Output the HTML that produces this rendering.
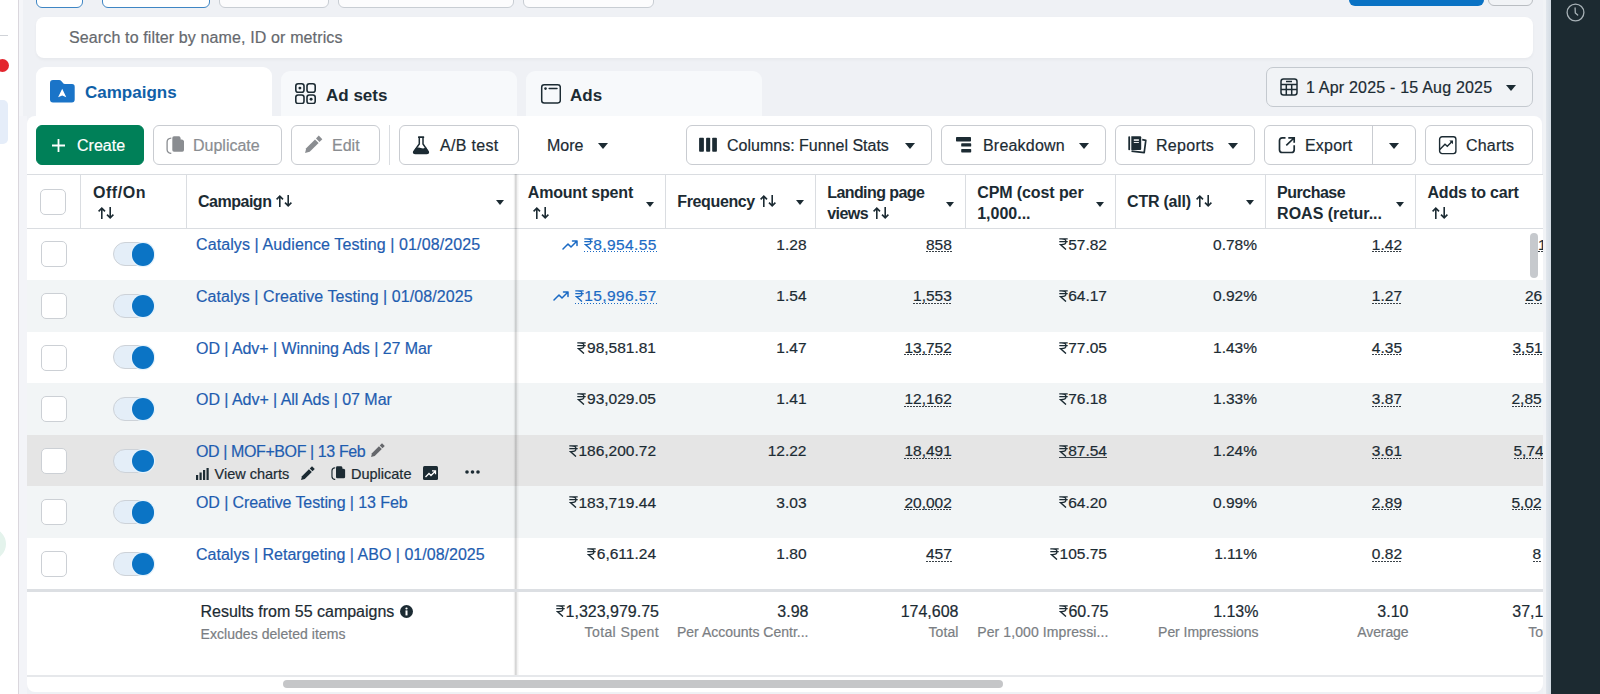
<!DOCTYPE html>
<html><head><meta charset="utf-8">
<style>
*{box-sizing:border-box;margin:0;padding:0}
html,body{width:1600px;height:694px;overflow:hidden}
body{position:relative;background:#eff1f5;font-family:"Liberation Sans",sans-serif;color:#1c2b33;font-size:16px}
.abs{position:absolute}
#sidebar{left:0;top:0;width:19px;height:694px;background:#fff;border-right:1px solid #dad7dd}
#rightstrip{left:1543px;top:0;width:8px;height:694px;background:linear-gradient(to right,#f1f3f6 0,#f1f3f6 3px,#e2e7ed 3px,#d3dbe3 8px)}
#dark{left:1551px;top:0;width:49px;height:694px;background:#1c2a31}
.topbtn{position:absolute;top:-20px;height:28px;border:1px solid #c8cdd3;border-radius:6px;background:#fcfcfd}
.topbtn.blue{border:1.5px solid #3f86c4;background:#fff}
#search{left:36px;top:17px;width:1497px;height:41px;background:#fff;border-radius:8px;box-shadow:0 1.5px 3px rgba(0,0,0,0.035)}
#search span{position:absolute;left:33px;top:11px;font-size:16px;color:#66696e;line-height:20px;letter-spacing:0.13px}
.tab{position:absolute;top:71px;height:46px;width:236px;background:#f7f9fb;border-radius:9px 9px 0 0}
.tab.active{top:67px;height:50px;background:#fff}
.tab .lbl{position:absolute;font-weight:bold;font-size:17px;line-height:20px}
#date{left:1266px;top:67px;width:267px;height:40px;border:1px solid #c4c9cf;border-radius:7px;background:#f1f3f6}
#panel{left:27px;top:116px;width:1515px;height:60px;background:#fff;border-radius:8px 8px 0 0}
.btn{position:absolute;top:125px;height:40px;border:1px solid #c9ccd1;border-radius:6px;background:#fff;font-size:16px;line-height:20px;color:#1c2b33}
.btn .t{position:absolute;top:10.3px;white-space:nowrap}
.tri{position:absolute;width:0;height:0;border-left:5px solid transparent;border-right:5px solid transparent;border-top:6px solid #1c2b33}
#card{left:27px;top:174px;width:1516px;height:518px;background:#fff;border-radius:0 0 8px 8px;overflow:hidden}
#card .hline{position:absolute;left:0;width:1516px;height:1px;background:#dadde1}
.vl{position:absolute;width:1px;background:#dadde1}
.row{position:absolute;left:0;width:1516px;height:51.5px}
.row.g{background:#f2f5f6}
.row.h{background:#e5e5e5}
.cb{position:absolute;left:13.5px;width:26px;height:26px;border:1px solid #ccd0d5;border-radius:5px;background:#fff}
.tg{position:absolute;left:85.5px;width:42px;height:24px;border-radius:12px;background:#e4eef8;border:1px solid #cdd2d8}
.tg::after{content:"";position:absolute;right:-0.5px;top:0px;width:22.5px;height:22.5px;border-radius:50%;background:#0b74c5;box-shadow:0 0 0 1.2px #e6f3fc}
.hd{position:absolute;top:0;height:54px;font-weight:bold;font-size:16px;line-height:21px;color:#1c2b33}
.hd .t{position:absolute;left:11px;top:8px;white-space:nowrap}
.hd .one{top:18.5px}
.hd .tri{top:26px}
.name{position:absolute;left:169px;font-size:16px;color:#1f5db0;white-space:nowrap;line-height:20px}
.num{position:absolute;font-size:15.5px;line-height:20px;white-space:nowrap;text-align:right}
.dot{background-image:linear-gradient(to right,#3a4248 55%,transparent 55%);background-size:3px 1.4px;background-repeat:repeat-x;background-position:0 calc(100% - 0.2px)}
.acts{position:absolute;left:169px;width:300px;height:20px;font-size:14.5px;line-height:20px;color:#1c2b33;white-space:nowrap}
.dot.blue{background-image:linear-gradient(to right,#1b6ac4 50%,transparent 50%)}
.foot{position:absolute;text-align:right;white-space:nowrap}
.foot .v{font-size:16px;line-height:20px;color:#1c2b33}
.foot .s{font-size:14px;line-height:20px;color:#7a7e83;margin-top:0.5px}
body{-webkit-text-stroke:0.2px currentColor}
.hd,.tab .lbl{-webkit-text-stroke:0}
</style></head><body>
<div id="sidebar" class="abs">
  <div class="abs" style="left:0;top:35px;width:8px;height:1px;background:#d0d3d8"></div>
  <div class="abs" style="left:-4px;top:59px;width:13px;height:13px;border-radius:50%;background:#e3262e"></div>
  <div class="abs" style="left:-6px;top:100px;width:14px;height:44px;border-radius:5px;background:#e5edf9"></div>
  <div class="abs" style="left:-26px;top:528px;width:32px;height:32px;border-radius:50%;background:#e4f3ec"></div>
</div>
<div id="rightstrip" class="abs"></div>
<div class="abs" style="left:19px;top:0;width:4px;height:116px;background:#f5f6f9"></div>
<div class="abs" style="left:19px;top:116px;width:8px;height:578px;background:#f3f4f8"></div>
<div id="dark" class="abs">
  <svg class="abs" style="left:14.4px;top:2px" width="21" height="21" viewBox="0 0 21 21"><circle cx="10.5" cy="10.5" r="8.4" fill="none" stroke="#a7b1b6" stroke-width="1.3"/><path d="M10.1 6 L10.3 10.9 L12.7 13.1" fill="none" stroke="#a7b1b6" stroke-width="1.3" stroke-linecap="round"/></svg>
</div>

<div class="topbtn blue" style="left:36px;width:47px"></div>
<div class="topbtn blue" style="left:102px;width:108px"></div>
<div class="topbtn" style="left:219px;width:110px"></div>
<div class="topbtn" style="left:338px;width:176px"></div>
<div class="topbtn" style="left:523px;width:131px"></div>
<div class="abs" style="left:1349px;top:-20px;width:135px;height:26px;border-radius:6px;background:#0a72c4"></div>
<div class="topbtn" style="left:1488px;width:45px;height:26px;background:#f1f3f6;border-color:#b9bdc2;border-width:1.3px"></div>

<div id="search" class="abs"><span>Search to filter by name, ID or metrics</span></div>

<div class="tab active" style="left:36px">
  <svg class="abs" style="left:14px;top:13px" width="25" height="23" viewBox="0 0 25 23"><path d="M0 3 Q0 0 3 0 H9 Q10.5 0 11.5 1.2 L12.8 2.8 Q13.5 4 15 4 H22 Q24.7 4 24.7 6.8 V19.5 Q24.7 22.4 21.8 22.4 H3 Q0 22.4 0 19.5 Z" fill="#1a74c8"/><path d="M12.2 8.7 L16.3 17.2 L12.2 15.4 L8.1 17.2 Z" fill="#fff"/></svg>
  <span class="lbl" style="left:49px;top:15.5px;color:#0f60a8">Campaigns</span>
</div>
<div class="tab" style="left:281px">
  <svg class="abs" style="left:14px;top:12px" width="21" height="21" viewBox="0 0 21 21" fill="none" stroke="#1c2b33" stroke-width="1.6"><rect x="0.8" y="0.8" width="8.2" height="8.5" rx="2.3"/><rect x="12" y="0.8" width="8.2" height="8.5" rx="2.3"/><rect x="0.8" y="12" width="8.2" height="8.5" rx="2.3"/><rect x="12" y="12" width="8.2" height="8.5" rx="2.3"/><circle cx="4.9" cy="5.1" r="1.45" fill="#1c2b33" stroke="none"/><circle cx="16.1" cy="16.3" r="1.45" fill="#1c2b33" stroke="none"/></svg>
  <span class="lbl" style="left:45px;top:14.5px">Ad sets</span>
</div>
<div class="tab" style="left:526px">
  <svg class="abs" style="left:14px;top:12px" width="21" height="21" viewBox="0 0 21 21" fill="none" stroke="#1c2b33" stroke-width="1.5"><rect x="1.7" y="1.7" width="18.6" height="18.2" rx="2.5"/><circle cx="5.5" cy="5.6" r="1.3" fill="#1c2b33" stroke="none"/><line x1="9.2" y1="5.6" x2="17" y2="5.6" stroke-linecap="round"/></svg>
  <span class="lbl" style="left:44px;top:14.5px">Ads</span>
</div>

<div id="date" class="abs">
  <svg class="abs" style="left:13px;top:10px" width="18" height="18" viewBox="0 0 18 18" fill="none" stroke="#1c2b33" stroke-width="1.5"><rect x="1" y="1" width="16" height="16" rx="2.5"/><line x1="1" y1="6.5" x2="17" y2="6.5"/><line x1="1" y1="11.5" x2="17" y2="11.5"/><line x1="6.3" y1="6.5" x2="6.3" y2="17"/><line x1="11.7" y1="6.5" x2="11.7" y2="17"/><line x1="6" y1="3.5" x2="12" y2="3.5"/></svg>
  <span class="abs" style="left:39px;top:10px;font-size:16px;line-height:20px;letter-spacing:0.2px">1 Apr 2025 - 15 Aug 2025</span>
  <div class="tri" style="left:239px;top:17px"></div>
</div>

<div id="panel" class="abs"></div>

<!-- toolbar -->
<div class="btn" style="left:36px;width:108px;background:#008058;border-color:#008058;color:#fff">
  <svg class="abs" style="left:14px;top:12px" width="15" height="15" viewBox="0 0 15 15"><path d="M7.5 1 V14 M1 7.5 H14" stroke="#fff" stroke-width="1.8"/></svg>
  <span class="t" style="left:40px;color:#fff">Create</span>
</div>
<div class="btn" style="left:153px;width:129px;color:#8a8d91">
  <svg class="abs" style="left:12px;top:10px" width="19" height="18" viewBox="0 0 19 18"><path d="M5.3 2.2 Q1.1 2.5 1.1 6 V13.5 Q1.1 17 5.3 17.4" fill="none" stroke="#8a8d91" stroke-width="1.3"/><path d="M8 0.2 H13.3 L18 4.9 V14 Q18 15.7 16.3 15.7 H8 Q6.3 15.7 6.3 14 V1.9 Q6.3 0.2 8 0.2 Z" fill="#8a8d91"/><path d="M14.6 0.6 L17.6 3.6 H14.6 Z" fill="#fff"/></svg>
  <span class="t" style="left:39px">Duplicate</span>
</div>
<div class="btn" style="left:291px;width:89px;color:#8a8d91">
  <svg class="abs" style="left:0;top:0" width="40" height="38" viewBox="0 0 40 38" fill="#8a8d91"><path d="M13.1 26.9 L14.2 22.3 L23 13.4 L26.6 17 L17.7 25.8 Z"/><path d="M24 12.5 L27.5 16 L30.3 13.2 L26.8 9.6 Z"/></svg>
  <span class="t" style="left:40px">Edit</span>
</div>
<div class="abs" style="left:389px;top:125px;width:1px;height:40px;background:#dadde1"></div>
<div class="btn" style="left:399px;width:120px">
  <svg class="abs" style="left:12px;top:9px" width="18" height="20" viewBox="0 0 18 20"><rect x="6" y="1.3" width="6.2" height="1.8" rx="0.6" fill="#1c2b33"/><path d="M7.3 2.5 V9 L1.8 16.5 Q1 18.6 3.4 18.6 H14.6 Q17 18.6 16.2 16.5 L11 9 V2.5" fill="none" stroke="#1c2b33" stroke-width="1.5"/><path d="M3.6 13.3 Q6.5 11.8 8.8 12.9 Q11.3 14 14.2 12.6 L16.2 16.5 Q17 18.6 14.6 18.6 H3.4 Q1 18.6 1.8 16.5 Z" fill="#1c2b33"/></svg>
  <span class="t" style="left:40px;letter-spacing:0.3px">A/B test</span>
</div>
<span class="abs" style="left:547px;top:135.5px;font-size:16px;line-height:20px">More</span>
<div class="tri" style="left:598px;top:143px"></div>

<div class="btn" style="left:686px;width:246px">
  <svg class="abs" style="left:12px;top:11px" width="19" height="16" viewBox="0 0 19 16" fill="#1c2b33"><rect x="0.1" y="0.8" width="4.8" height="14" rx="0.8"/><rect x="7.1" y="0.8" width="4.1" height="14" rx="0.8"/><rect x="13.2" y="0.8" width="4.7" height="14" rx="0.8"/></svg>
  <span class="t" style="left:40px">Columns: Funnel Stats</span>
  <div class="tri" style="left:218px;top:17px"></div>
</div>
<div class="btn" style="left:941px;width:165px">
  <svg class="abs" style="left:14px;top:10px" width="17" height="18" viewBox="0 0 17 18" fill="#1c2b33"><rect x="0" y="1.1" width="15" height="4.4" rx="0.7"/><rect x="5.2" y="7.2" width="10" height="3.4" rx="0.7"/><rect x="5.2" y="13" width="10" height="3.5" rx="0.7"/></svg>
  <span class="t" style="left:41px;letter-spacing:0.2px">Breakdown</span>
  <div class="tri" style="left:137px;top:17px"></div>
</div>
<div class="btn" style="left:1115px;width:140px">
  <svg class="abs" style="left:12px;top:10px" width="20" height="18" viewBox="0 0 20 18"><rect x="0.3" y="0.3" width="1.8" height="14" rx="0.8" fill="#1c2b33"/><path d="M3.3 0.3 H12.2 Q13.2 0.3 13.2 1.3 V13 Q13.2 14 12.2 14 H3.3 Z" fill="#1c2b33"/><rect x="5.8" y="3.3" width="5.1" height="1.5" fill="#fff"/><rect x="5.8" y="6.1" width="5.1" height="0.9" fill="#fff"/><path d="M14.2 3.7 L17.8 4.4 L16.2 16.6 L3.5 15.1" fill="none" stroke="#1c2b33" stroke-width="1.7" stroke-linejoin="round"/></svg>
  <span class="t" style="left:40px;letter-spacing:0.3px">Reports</span>
  <div class="tri" style="left:112px;top:17px"></div>
</div>
<div class="btn" style="left:1264px;width:152px">
  <svg class="abs" style="left:13px;top:10px" width="18" height="18" viewBox="0 0 18 18" fill="none" stroke="#1c2b33" stroke-width="1.7"><path d="M7.5 1.8 H4.3 Q1.5 1.8 1.5 4.6 V13.7 Q1.5 16.5 4.3 16.5 H13.4 Q16.2 16.5 16.2 13.7 V9.2"/><path d="M10.3 1.8 H16.2 V6.8 M16 2 L8.3 9.3"/></svg>
  <span class="t" style="left:40px;letter-spacing:0.2px">Export</span>
  <div class="abs" style="left:107px;top:0;width:1px;height:38px;background:#c9ccd1"></div>
  <div class="tri" style="left:124px;top:17px"></div>
</div>
<div class="btn" style="left:1425px;width:108px">
  <svg class="abs" style="left:12px;top:9px" width="20" height="20" viewBox="0 0 20 20" fill="none" stroke="#1c2b33" stroke-width="1.4"><rect x="1.6" y="1.7" width="16.3" height="16.9" rx="2.5"/><path d="M1.8 14.6 L7 9.3 L9.3 11.3 L14.3 6.3"/><path d="M11.3 5.6 H15 V9.3 Z" fill="#1c2b33" stroke="none"/></svg>
  <span class="t" style="left:40px;letter-spacing:0.2px">Charts</span>
</div>

<div id="card" class="abs">
<div class="hline" style="top:0"></div>
<div class="hline" style="top:53.9px"></div>
<div class="vl" style="left:52.8px;top:0.5px;height:54.4px"></div>
<div class="vl" style="left:158.7px;top:0.5px;height:54.4px"></div>
<div class="vl" style="left:638.0px;top:0.5px;height:54.4px"></div>
<div class="vl" style="left:787.9px;top:0.5px;height:54.4px"></div>
<div class="vl" style="left:937.9px;top:0.5px;height:54.4px"></div>
<div class="vl" style="left:1087.8px;top:0.5px;height:54.4px"></div>
<div class="vl" style="left:1237.8px;top:0.5px;height:54.4px"></div>
<div class="vl" style="left:1388.2px;top:0.5px;height:54.4px"></div>
<div class="cb" style="top:15px;left:13.2px"></div>
<div class="hd" style="left:53.3px;width:105.89999999999999px"><div class="t" style="top:8.4px;left:12.7px"><span style="letter-spacing:0.541px">Off/On</span><br><svg width="17" height="12" viewBox="0 0 17 12" style="display:inline-block;vertical-align:baseline;margin-left:5px" fill="none" stroke="#1c2b33" stroke-width="1.6" stroke-linejoin="miter"><path d="M3.8 12 V1.2 M0.6 4.4 L3.8 1.2 L7 4.4"/><path d="M12.2 0 V10.8 M9 7.6 L12.2 10.8 L15.4 7.6"/></svg></div></div>
<div class="hd" style="left:159.2px;width:329.8px"><div class="t" style="top:17.2px;left:11.8px"><span style="letter-spacing:-0.487px">Campaign</span><svg width="17" height="12" viewBox="0 0 17 12" style="display:inline-block;vertical-align:baseline;margin-left:5px" fill="none" stroke="#1c2b33" stroke-width="1.6" stroke-linejoin="miter"><path d="M3.8 12 V1.2 M0.6 4.4 L3.8 1.2 L7 4.4"/><path d="M12.2 0 V10.8 M9 7.6 L12.2 10.8 L15.4 7.6"/></svg></div><div class="tri" style="left:310.3px;top:25.6px;border-left-width:4.6px;border-right-width:4.6px;border-top-width:5.5px"></div></div>
<div class="hd" style="left:489px;width:149.5px"><div class="t" style="top:8.4px;left:11.8px"><span style="letter-spacing:-0.193px">Amount spent</span><br><svg width="17" height="12" viewBox="0 0 17 12" style="display:inline-block;vertical-align:baseline;margin-left:5px" fill="none" stroke="#1c2b33" stroke-width="1.6" stroke-linejoin="miter"><path d="M3.8 12 V1.2 M0.6 4.4 L3.8 1.2 L7 4.4"/><path d="M12.2 0 V10.8 M9 7.6 L12.2 10.8 L15.4 7.6"/></svg></div><div class="tri" style="left:130.0px;top:28px;border-left-width:4.6px;border-right-width:4.6px;border-top-width:5.5px"></div></div>
<div class="hd" style="left:638.5px;width:149.89999999999998px"><div class="t" style="top:17.2px;left:11.8px"><span style="letter-spacing:-0.373px">Frequency</span><svg width="17" height="12" viewBox="0 0 17 12" style="display:inline-block;vertical-align:baseline;margin-left:5px" fill="none" stroke="#1c2b33" stroke-width="1.6" stroke-linejoin="miter"><path d="M3.8 12 V1.2 M0.6 4.4 L3.8 1.2 L7 4.4"/><path d="M12.2 0 V10.8 M9 7.6 L12.2 10.8 L15.4 7.6"/></svg></div><div class="tri" style="left:130.39999999999998px;top:25.6px;border-left-width:4.6px;border-right-width:4.6px;border-top-width:5.5px"></div></div>
<div class="hd" style="left:788.4px;width:150.0px"><div class="t" style="top:8.4px;left:11.8px"><span style="letter-spacing:-0.572px">Landing page</span><br><span style="letter-spacing:-0.531px">views</span><svg width="17" height="12" viewBox="0 0 17 12" style="display:inline-block;vertical-align:baseline;margin-left:5px" fill="none" stroke="#1c2b33" stroke-width="1.6" stroke-linejoin="miter"><path d="M3.8 12 V1.2 M0.6 4.4 L3.8 1.2 L7 4.4"/><path d="M12.2 0 V10.8 M9 7.6 L12.2 10.8 L15.4 7.6"/></svg></div><div class="tri" style="left:130.5px;top:28px;border-left-width:4.6px;border-right-width:4.6px;border-top-width:5.5px"></div></div>
<div class="hd" style="left:938.4px;width:149.89999999999998px"><div class="t" style="top:8.4px;left:11.8px"><span style="letter-spacing:-0.095px">CPM (cost per</span><br>1,000...</div><div class="tri" style="left:130.39999999999998px;top:28px;border-left-width:4.6px;border-right-width:4.6px;border-top-width:5.5px"></div></div>
<div class="hd" style="left:1088.3px;width:150.0px"><div class="t" style="top:17.2px;left:11.8px"><span style="letter-spacing:-0.229px">CTR (all)</span><svg width="17" height="12" viewBox="0 0 17 12" style="display:inline-block;vertical-align:baseline;margin-left:5px" fill="none" stroke="#1c2b33" stroke-width="1.6" stroke-linejoin="miter"><path d="M3.8 12 V1.2 M0.6 4.4 L3.8 1.2 L7 4.4"/><path d="M12.2 0 V10.8 M9 7.6 L12.2 10.8 L15.4 7.6"/></svg></div><div class="tri" style="left:130.5px;top:25.6px;border-left-width:4.6px;border-right-width:4.6px;border-top-width:5.5px"></div></div>
<div class="hd" style="left:1238.3px;width:150.4000000000001px"><div class="t" style="top:8.4px;left:11.8px"><span style="letter-spacing:-0.499px">Purchase</span><br>ROAS (retur...</div><div class="tri" style="left:130.9000000000001px;top:28px;border-left-width:4.6px;border-right-width:4.6px;border-top-width:5.5px"></div></div>
<div class="hd" style="left:1388.7px;width:160.0px"><div class="t" style="top:8.4px;left:11.8px"><span style="letter-spacing:-0.175px">Adds to cart</span><br><svg width="17" height="12" viewBox="0 0 17 12" style="display:inline-block;vertical-align:baseline;margin-left:5px" fill="none" stroke="#1c2b33" stroke-width="1.6" stroke-linejoin="miter"><path d="M3.8 12 V1.2 M0.6 4.4 L3.8 1.2 L7 4.4"/><path d="M12.2 0 V10.8 M9 7.6 L12.2 10.8 L15.4 7.6"/></svg></div></div>
<div class="row" style="top:54.4px">
<div class="cb" style="top:13px"></div>
<div class="tg" style="top:13.8px"></div>
<div class="name" style="top:7px;letter-spacing:0.103px">Catalys | Audience Testing | 01/08/2025</div>
<div class="num" style="right:886.2px;top:6.3px;color:#1b6ac4"><svg width="17" height="11" viewBox="0 0 17 11" style="display:inline-block;margin-right:5px;vertical-align:0px" fill="none" stroke="#1b6ac4" stroke-width="1.5" stroke-linecap="round" stroke-linejoin="round"><path d="M1 10 L6 5 L9 8 L15 2 M10.5 2 H15 V6.5"/></svg><span class="dot blue" style="letter-spacing:0.4px"><svg width="9" height="12" viewBox="0 0 9 12" style="display:inline-block;margin-right:0.6px;vertical-align:-0.8px" fill="none" stroke="currentColor" stroke-width="1.3"><path d="M0.3 0.8 H8.7 M0.3 3.7 H8.7 M2.3 0.8 Q7 0.8 7 3.7 Q7 6.6 2.3 6.6 H1.4 L7 11.6"/></svg>8,954.55</span></div>
<div class="num" style="right:736.5px;top:6.3px">1.28</div>
<div class="num" style="right:591.2px;top:6.3px"><span class="dot">858</span></div>
<div class="num" style="right:436px;top:6.3px"><svg width="9" height="12" viewBox="0 0 9 12" style="display:inline-block;margin-right:0.6px;vertical-align:-0.8px" fill="none" stroke="currentColor" stroke-width="1.3"><path d="M0.3 0.8 H8.7 M0.3 3.7 H8.7 M2.3 0.8 Q7 0.8 7 3.7 Q7 6.6 2.3 6.6 H1.4 L7 11.6"/></svg>57.82</div>
<div class="num" style="right:286px;top:6.3px">0.78%</div>
<div class="num" style="right:141px;top:6.3px"><span class="dot">1.42</span></div>
<div class="num" style="left:1511px;top:6.3px;text-align:left"><span class="dot">1</span></div>
</div>
<div class="row g" style="top:106.0px">
<div class="cb" style="top:13px"></div>
<div class="tg" style="top:13.8px"></div>
<div class="name" style="top:7px;letter-spacing:0.068px">Catalys | Creative Testing | 01/08/2025</div>
<div class="num" style="right:886.2px;top:6.3px;color:#1b6ac4"><svg width="17" height="11" viewBox="0 0 17 11" style="display:inline-block;margin-right:5px;vertical-align:0px" fill="none" stroke="#1b6ac4" stroke-width="1.5" stroke-linecap="round" stroke-linejoin="round"><path d="M1 10 L6 5 L9 8 L15 2 M10.5 2 H15 V6.5"/></svg><span class="dot blue" style="letter-spacing:0.4px"><svg width="9" height="12" viewBox="0 0 9 12" style="display:inline-block;margin-right:0.6px;vertical-align:-0.8px" fill="none" stroke="currentColor" stroke-width="1.3"><path d="M0.3 0.8 H8.7 M0.3 3.7 H8.7 M2.3 0.8 Q7 0.8 7 3.7 Q7 6.6 2.3 6.6 H1.4 L7 11.6"/></svg>15,996.57</span></div>
<div class="num" style="right:736.5px;top:6.3px">1.54</div>
<div class="num" style="right:591.2px;top:6.3px"><span class="dot">1,553</span></div>
<div class="num" style="right:436px;top:6.3px"><svg width="9" height="12" viewBox="0 0 9 12" style="display:inline-block;margin-right:0.6px;vertical-align:-0.8px" fill="none" stroke="currentColor" stroke-width="1.3"><path d="M0.3 0.8 H8.7 M0.3 3.7 H8.7 M2.3 0.8 Q7 0.8 7 3.7 Q7 6.6 2.3 6.6 H1.4 L7 11.6"/></svg>64.17</div>
<div class="num" style="right:286px;top:6.3px">0.92%</div>
<div class="num" style="right:141px;top:6.3px"><span class="dot">1.27</span></div>
<div class="num" style="left:1498px;top:6.3px;text-align:left"><span class="dot">26</span></div>
</div>
<div class="row" style="top:157.6px">
<div class="cb" style="top:13px"></div>
<div class="tg" style="top:13.8px"></div>
<div class="name" style="top:7px;letter-spacing:-0.055px">OD | Adv+ | Winning Ads | 27 Mar</div>
<div class="num" style="right:887px;top:6.3px"><svg width="9" height="12" viewBox="0 0 9 12" style="display:inline-block;margin-right:0.6px;vertical-align:-0.8px" fill="none" stroke="currentColor" stroke-width="1.3"><path d="M0.3 0.8 H8.7 M0.3 3.7 H8.7 M2.3 0.8 Q7 0.8 7 3.7 Q7 6.6 2.3 6.6 H1.4 L7 11.6"/></svg>98,581.81</div>
<div class="num" style="right:736.5px;top:6.3px">1.47</div>
<div class="num" style="right:591.2px;top:6.3px"><span class="dot">13,752</span></div>
<div class="num" style="right:436px;top:6.3px"><svg width="9" height="12" viewBox="0 0 9 12" style="display:inline-block;margin-right:0.6px;vertical-align:-0.8px" fill="none" stroke="currentColor" stroke-width="1.3"><path d="M0.3 0.8 H8.7 M0.3 3.7 H8.7 M2.3 0.8 Q7 0.8 7 3.7 Q7 6.6 2.3 6.6 H1.4 L7 11.6"/></svg>77.05</div>
<div class="num" style="right:286px;top:6.3px">1.43%</div>
<div class="num" style="right:141px;top:6.3px"><span class="dot">4.35</span></div>
<div class="num" style="left:1485.5px;top:6.3px;text-align:left"><span class="dot">3,51</span></div>
</div>
<div class="row g" style="top:209.20000000000002px">
<div class="cb" style="top:13px"></div>
<div class="tg" style="top:13.8px"></div>
<div class="name" style="top:7px;letter-spacing:-0.043px">OD | Adv+ | All Ads | 07 Mar</div>
<div class="num" style="right:887px;top:6.3px"><svg width="9" height="12" viewBox="0 0 9 12" style="display:inline-block;margin-right:0.6px;vertical-align:-0.8px" fill="none" stroke="currentColor" stroke-width="1.3"><path d="M0.3 0.8 H8.7 M0.3 3.7 H8.7 M2.3 0.8 Q7 0.8 7 3.7 Q7 6.6 2.3 6.6 H1.4 L7 11.6"/></svg>93,029.05</div>
<div class="num" style="right:736.5px;top:6.3px">1.41</div>
<div class="num" style="right:591.2px;top:6.3px"><span class="dot">12,162</span></div>
<div class="num" style="right:436px;top:6.3px"><svg width="9" height="12" viewBox="0 0 9 12" style="display:inline-block;margin-right:0.6px;vertical-align:-0.8px" fill="none" stroke="currentColor" stroke-width="1.3"><path d="M0.3 0.8 H8.7 M0.3 3.7 H8.7 M2.3 0.8 Q7 0.8 7 3.7 Q7 6.6 2.3 6.6 H1.4 L7 11.6"/></svg>76.18</div>
<div class="num" style="right:286px;top:6.3px">1.33%</div>
<div class="num" style="right:141px;top:6.3px"><span class="dot">3.87</span></div>
<div class="num" style="left:1484.5px;top:6.3px;text-align:left"><span class="dot">2,85</span></div>
</div>
<div class="row h" style="top:260.8px">
<div class="cb" style="top:13px"></div>
<div class="tg" style="top:13.8px"></div>
<div class="name" style="top:7px;letter-spacing:-0.401px">OD | MOF+BOF | 13 Feb</div>
<svg class="abs" style="left:343.5px;top:7.800000000000011px" width="14" height="14" viewBox="13 9.4 17.6 17.6" fill="#65676b"><path d="M13.1 26.9 L14.2 22.3 L23 13.4 L26.6 17 L17.7 25.8 Z"/><path d="M24 12.5 L27.5 16 L30.3 13.2 L26.8 9.6 Z"/></svg>
<div class="acts" style="top:29px"><svg width="13" height="12" viewBox="0 0 13 12" fill="#1c2b33" style="position:absolute;left:0;top:4px"><rect x="0" y="7" width="2.2" height="5"/><rect x="3.5" y="4.5" width="2.2" height="7.5"/><rect x="7" y="2" width="2.2" height="10"/><rect x="10.5" y="0" width="2.2" height="12"/></svg><span style="position:absolute;left:18.5px;top:0">View charts</span><svg width="14" height="14" viewBox="13 9.4 17.6 17.6" style="position:absolute;left:105px;top:2.5px" fill="#1c2b33"><path d="M13.1 26.9 L14.2 22.3 L23 13.4 L26.6 17 L17.7 25.8 Z"/><path d="M24 12.5 L27.5 16 L30.3 13.2 L26.8 9.6 Z"/></svg><svg width="15" height="14" viewBox="0 0 19 18" style="position:absolute;left:135px;top:2.5px"><path d="M5.3 2.2 Q1.1 2.5 1.1 6 V13.5 Q1.1 17 5.3 17.4" fill="none" stroke="#1c2b33" stroke-width="1.5"/><path d="M8 0.2 H13.3 L18 4.9 V14 Q18 15.7 16.3 15.7 H8 Q6.3 15.7 6.3 14 V1.9 Q6.3 0.2 8 0.2 Z" fill="#1c2b33"/><path d="M14.6 0.6 L17.6 3.6 H14.6 Z" fill="#e6e6e6"/></svg><span style="position:absolute;left:155px;top:0">Duplicate</span><svg width="15" height="14" viewBox="0 0 15 14" style="position:absolute;left:227px;top:2.5px"><rect x="0" y="0" width="15" height="14" rx="1.5" fill="#1c2b33"/><path d="M2.5 11 L6 7.5 L8 9.5 L12 5.5 M9 4.8 H12.5 V8.3" fill="none" stroke="#fff" stroke-width="1.3"/></svg><svg width="15" height="4" viewBox="0 0 15 4" style="position:absolute;left:269px;top:6.5px" fill="#1c2b33"><circle cx="2" cy="2" r="1.8"/><circle cx="7.5" cy="2" r="1.8"/><circle cx="13" cy="2" r="1.8"/></svg></div>
<div class="num" style="right:887px;top:6.3px"><svg width="9" height="12" viewBox="0 0 9 12" style="display:inline-block;margin-right:0.6px;vertical-align:-0.8px" fill="none" stroke="currentColor" stroke-width="1.3"><path d="M0.3 0.8 H8.7 M0.3 3.7 H8.7 M2.3 0.8 Q7 0.8 7 3.7 Q7 6.6 2.3 6.6 H1.4 L7 11.6"/></svg>186,200.72</div>
<div class="num" style="right:736.5px;top:6.3px">12.22</div>
<div class="num" style="right:591.2px;top:6.3px"><span class="dot">18,491</span></div>
<div class="num" style="right:436px;top:6.3px"><span style="background-image:linear-gradient(#3a4248,#3a4248);background-size:100% 1.2px;background-repeat:no-repeat;background-position:0 calc(100% - 0.6px)"><svg width="9" height="12" viewBox="0 0 9 12" style="display:inline-block;margin-right:0.6px;vertical-align:-0.8px" fill="none" stroke="currentColor" stroke-width="1.3"><path d="M0.3 0.8 H8.7 M0.3 3.7 H8.7 M2.3 0.8 Q7 0.8 7 3.7 Q7 6.6 2.3 6.6 H1.4 L7 11.6"/></svg>87.54</span></div>
<div class="num" style="right:286px;top:6.3px">1.24%</div>
<div class="num" style="right:141px;top:6.3px"><span class="dot">3.61</span></div>
<div class="num" style="left:1486.5px;top:6.3px;text-align:left"><span class="dot">5,74</span></div>
</div>
<div class="row g" style="top:312.4px">
<div class="cb" style="top:13px"></div>
<div class="tg" style="top:13.8px"></div>
<div class="name" style="top:7px;letter-spacing:-0.095px">OD | Creative Testing | 13 Feb</div>
<div class="num" style="right:887px;top:6.3px"><svg width="9" height="12" viewBox="0 0 9 12" style="display:inline-block;margin-right:0.6px;vertical-align:-0.8px" fill="none" stroke="currentColor" stroke-width="1.3"><path d="M0.3 0.8 H8.7 M0.3 3.7 H8.7 M2.3 0.8 Q7 0.8 7 3.7 Q7 6.6 2.3 6.6 H1.4 L7 11.6"/></svg>183,719.44</div>
<div class="num" style="right:736.5px;top:6.3px">3.03</div>
<div class="num" style="right:591.2px;top:6.3px"><span class="dot">20,002</span></div>
<div class="num" style="right:436px;top:6.3px"><svg width="9" height="12" viewBox="0 0 9 12" style="display:inline-block;margin-right:0.6px;vertical-align:-0.8px" fill="none" stroke="currentColor" stroke-width="1.3"><path d="M0.3 0.8 H8.7 M0.3 3.7 H8.7 M2.3 0.8 Q7 0.8 7 3.7 Q7 6.6 2.3 6.6 H1.4 L7 11.6"/></svg>64.20</div>
<div class="num" style="right:286px;top:6.3px">0.99%</div>
<div class="num" style="right:141px;top:6.3px"><span class="dot">2.89</span></div>
<div class="num" style="left:1484.5px;top:6.3px;text-align:left"><span class="dot">5,02</span></div>
</div>
<div class="row" style="top:364.0px">
<div class="cb" style="top:13px"></div>
<div class="tg" style="top:13.8px"></div>
<div class="name" style="top:7px;letter-spacing:0.011px">Catalys | Retargeting | ABO | 01/08/2025</div>
<div class="num" style="right:887px;top:6.3px"><svg width="9" height="12" viewBox="0 0 9 12" style="display:inline-block;margin-right:0.6px;vertical-align:-0.8px" fill="none" stroke="currentColor" stroke-width="1.3"><path d="M0.3 0.8 H8.7 M0.3 3.7 H8.7 M2.3 0.8 Q7 0.8 7 3.7 Q7 6.6 2.3 6.6 H1.4 L7 11.6"/></svg>6,611.24</div>
<div class="num" style="right:736.5px;top:6.3px">1.80</div>
<div class="num" style="right:591.2px;top:6.3px"><span class="dot">457</span></div>
<div class="num" style="right:436px;top:6.3px"><svg width="9" height="12" viewBox="0 0 9 12" style="display:inline-block;margin-right:0.6px;vertical-align:-0.8px" fill="none" stroke="currentColor" stroke-width="1.3"><path d="M0.3 0.8 H8.7 M0.3 3.7 H8.7 M2.3 0.8 Q7 0.8 7 3.7 Q7 6.6 2.3 6.6 H1.4 L7 11.6"/></svg>105.75</div>
<div class="num" style="right:286px;top:6.3px">1.11%</div>
<div class="num" style="right:141px;top:6.3px"><span class="dot">0.82</span></div>
<div class="num" style="left:1505.5px;top:6.3px;text-align:left"><span class="dot">8</span></div>
</div>
<div class="vl" style="left:486.2px;top:0;width:6.5px;height:502px;background:linear-gradient(to right,rgba(0,0,0,0) 0,rgba(0,0,0,0.03) 1.2px,rgba(0,0,0,0.16) 2.3px,rgba(0,0,0,0.16) 3.2px,rgba(0,0,0,0.06) 4.2px,rgba(0,0,0,0) 6.5px)"></div>
<div class="abs" style="left:1503.2px;top:59.400000000000006px;width:7.6px;height:45px;border-radius:4px;background:#c6c9cd"></div>
<div class="hline" style="top:414.79999999999995px;height:3.5px;background:#dcdfe3"></div>
<div class="hline" style="top:501px;height:1.5px;background:#e6e8eb"></div>
<div class="abs" style="left:173.5px;top:427.5px;font-size:16px;line-height:20px;white-space:nowrap">Results from 55 campaigns <svg width="13" height="13" viewBox="0 0 13 13" style="vertical-align:-1px;margin-left:1px"><circle cx="6.5" cy="6.5" r="6.5" fill="#1c2b33"/><circle cx="6.5" cy="3.5" r="1.1" fill="#fff"/><rect x="5.5" y="5.4" width="2" height="5" fill="#fff"/></svg></div>
<div class="abs" style="left:173.5px;top:449.5px;font-size:14px;line-height:20px;color:#7a7e83;white-space:nowrap;letter-spacing:0.05px">Excludes deleted items</div>
<div class="foot" style="right:884px;top:427.5px"><div class="v"><svg width="9" height="12" viewBox="0 0 9 12" style="display:inline-block;margin-right:0.6px;vertical-align:-0.8px" fill="none" stroke="currentColor" stroke-width="1.3"><path d="M0.3 0.8 H8.7 M0.3 3.7 H8.7 M2.3 0.8 Q7 0.8 7 3.7 Q7 6.6 2.3 6.6 H1.4 L7 11.6"/></svg>1,323,979.75</div><div class="s" style="letter-spacing:0.4px">Total Spent</div></div>
<div class="foot" style="right:734.5px;top:427.5px"><div class="v">3.98</div><div class="s" style="letter-spacing:0px">Per Accounts Centr...</div></div>
<div class="foot" style="right:584.5px;top:427.5px"><div class="v">174,608</div><div class="s" style="letter-spacing:0.1px">Total</div></div>
<div class="foot" style="right:434.5px;top:427.5px"><div class="v"><svg width="9" height="12" viewBox="0 0 9 12" style="display:inline-block;margin-right:0.6px;vertical-align:-0.8px" fill="none" stroke="currentColor" stroke-width="1.3"><path d="M0.3 0.8 H8.7 M0.3 3.7 H8.7 M2.3 0.8 Q7 0.8 7 3.7 Q7 6.6 2.3 6.6 H1.4 L7 11.6"/></svg>60.75</div><div class="s" style="letter-spacing:0.1px">Per 1,000 Impressi...</div></div>
<div class="foot" style="right:284.5px;top:427.5px"><div class="v">1.13%</div><div class="s" style="letter-spacing:-0.05px">Per Impressions</div></div>
<div class="foot" style="right:134.5px;top:427.5px"><div class="v">3.10</div><div class="s" style="letter-spacing:-0.1px">Average</div></div>
<div class="foot" style="left:1485.3px;top:427.5px;text-align:left"><div class="v">37,135</div><div class="s" style="margin-left:16px">Total</div></div>
<div class="abs" style="left:256.3px;top:505.9px;width:720px;height:7.8px;border-radius:4px;background:#c5c6c8"></div>
</div>
</body></html>
